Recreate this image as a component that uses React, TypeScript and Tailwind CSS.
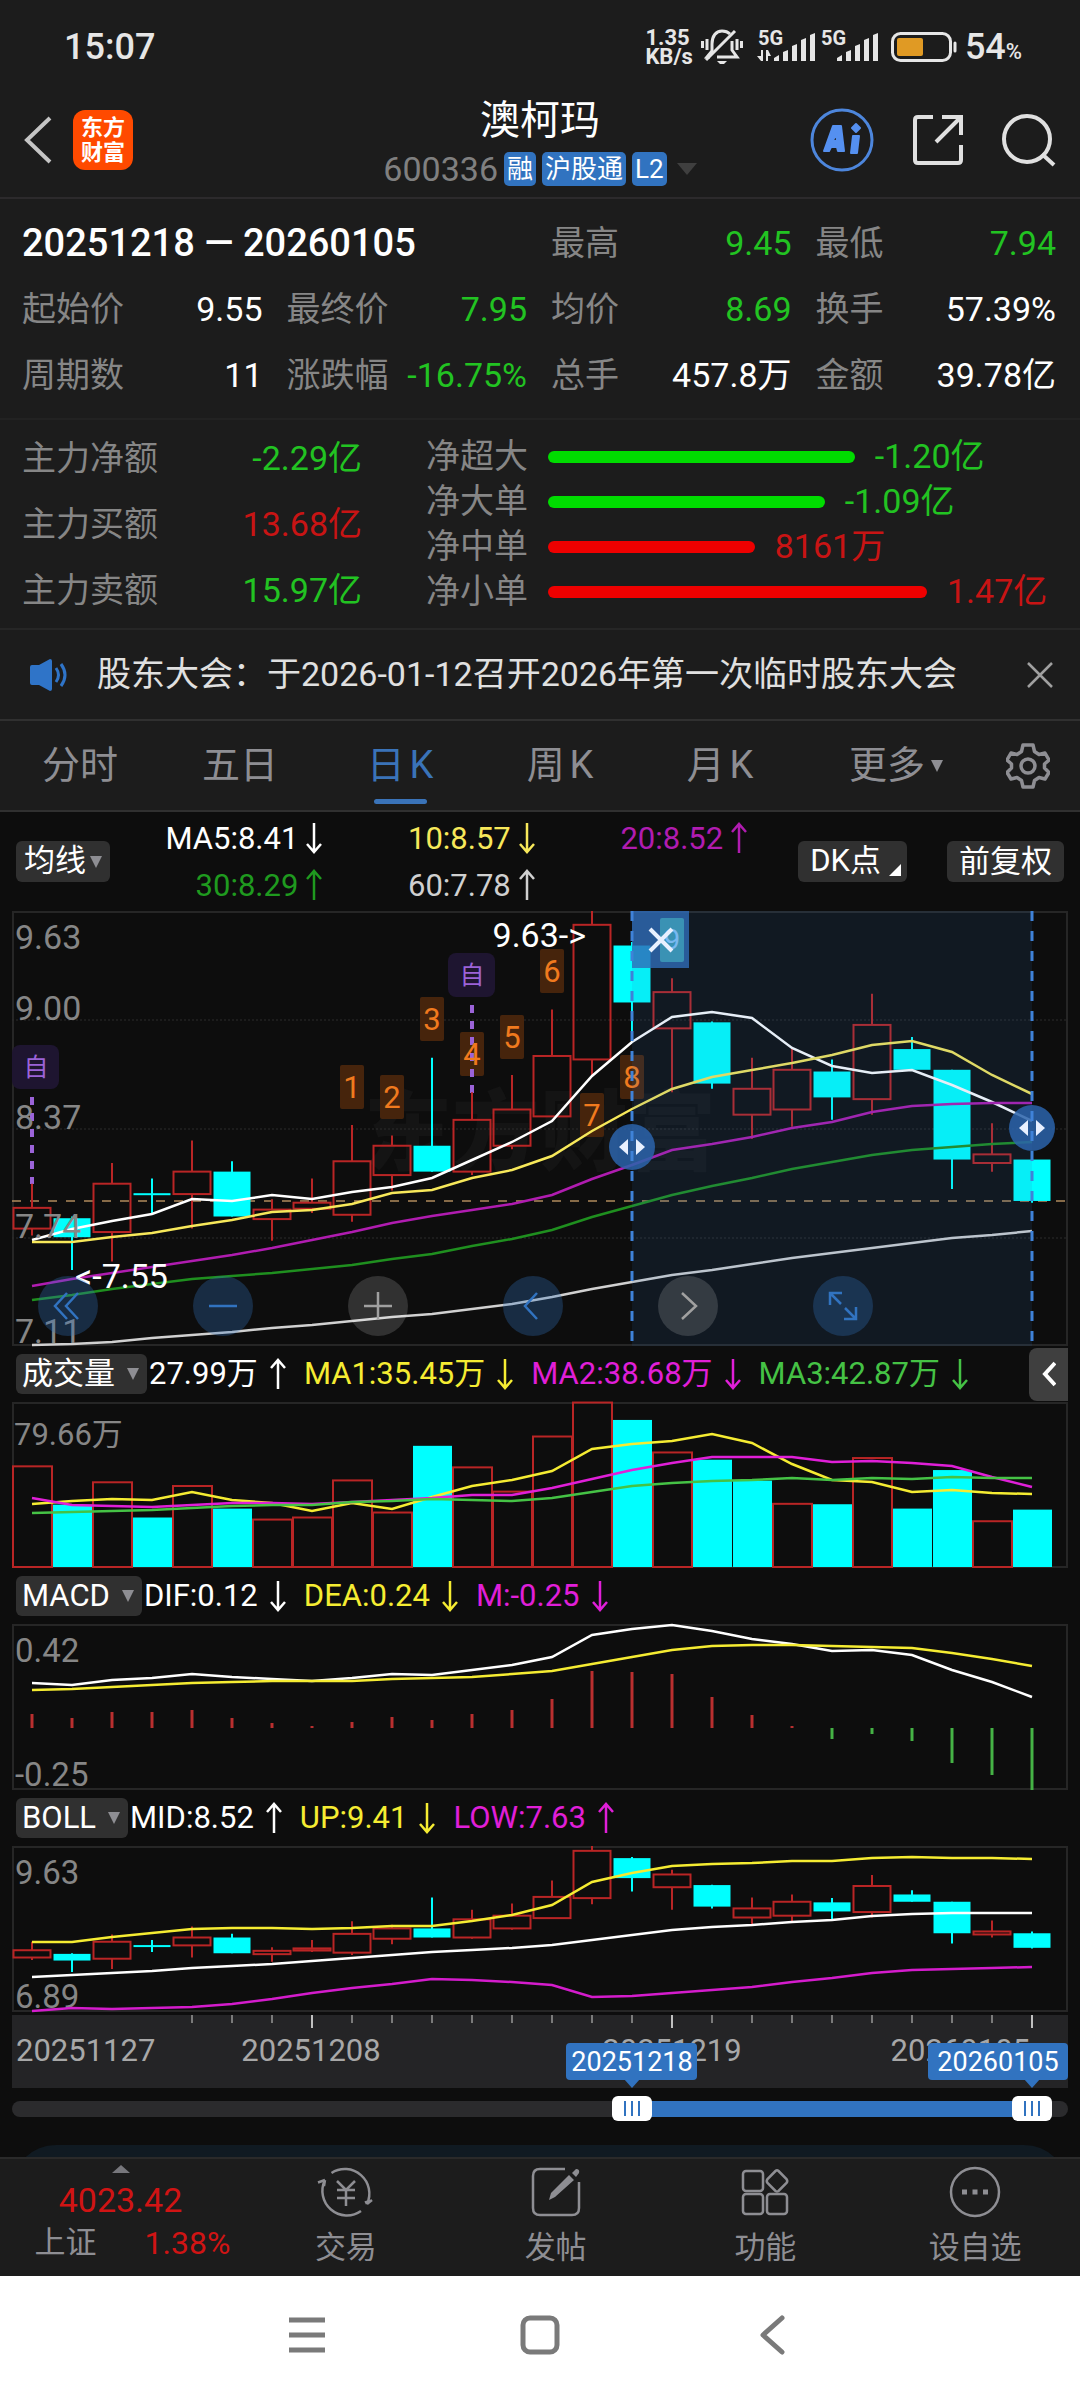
import type { ReactNode } from "react";

const RED = "#b92525";
const CYAN = "#00ffff";

// [high, body top, body bottom, low, rising]
type Candle = [number, number, number, number, boolean];

const candles: Candle[] = [
  [8.05, 7.91, 7.79, 7.75, true],
  [7.86, 7.85, 7.74, 7.55, false],
  [8.17, 8.05, 7.77, 7.6, true],
  [8.08, 7.995, 7.985, 7.88, false],
  [8.3, 8.12, 7.99, 7.79, true],
  [8.18, 8.12, 7.86, 7.86, false],
  [7.96, 7.9, 7.845, 7.72, true],
  [8.08, 7.94, 7.905, 7.88, true],
  [8.39, 8.18, 7.87, 7.83, true],
  [8.33, 8.27, 8.1, 8.01, true],
  [8.78, 8.27, 8.12, 8.12, false],
  [8.58, 8.42, 8.12, 8.1, true],
  [8.68, 8.48, 8.27, 8.25, true],
  [9.06, 8.79, 8.44, 8.44, true],
  [9.63, 9.55, 8.77, 8.67, true],
  [9.45, 9.43, 9.1, 8.88, false],
  [9.24, 9.16, 8.95, 8.58, true],
  [8.99, 8.985, 8.63, 8.6, false],
  [8.78, 8.6, 8.45, 8.31, true],
  [8.83, 8.71, 8.48, 8.38, true],
  [8.77, 8.7, 8.55, 8.42, false],
  [9.15, 8.97, 8.54, 8.45, true],
  [8.9, 8.83, 8.71, 8.71, false],
  [8.71, 8.71, 8.19, 8.02, false],
  [8.4, 8.22, 8.17, 8.12, true],
  [8.22, 8.19, 7.95, 7.94, false],
];

// volume in 万, negative when the bar is a falling one
const volumes = [
  48.6, -30.1, 40.9, -23.9, 39.1, -28.2, 22.9, 23.9, 41.8, 26.3, -58.5, 48.1,
  36.4, 63, 79.4, -71, 55.3, -51.8, -41.7, 30.5, -30.3, 52.6, -28.2, -46.8,
  22.1, -27.7,
];

const macdBars = [
  14, 10, 16, 16, 18, 10, 5, 2, 6, 11, 8, 14, 18, 29, 57, 56, 54, 31, 13, 2,
  -11, -6, -13, -35, -47, -62,
];

const priceLines = [
  { color: "#ffffff", ys: [329, 318, 310, 303, 288, 290, 284, 288, 281, 276, 267, 249, 231, 210, 165, 131, 106, 101, 107, 137, 155, 162, 159, 174, 191, 210] },
  { color: "#f7e85a", ys: [331, 331, 326, 322, 315, 309, 301, 299, 293, 282, 279, 267, 259, 245, 220, 198, 178, 166, 159, 152, 144, 134, 130, 141, 164, 183] },
  { color: "#b01cb0", ys: [375, 368, 362, 356, 350, 344, 337, 329, 321, 312, 305, 299, 293, 284, 268, 254, 239, 233, 226, 217, 211, 201, 195, 193, 192, 192] },
  { color: "#1f8f1f", ys: [389, 384, 378, 373, 368, 365, 362, 358, 354, 348, 343, 335, 328, 319, 306, 295, 284, 275, 267, 258, 251, 244, 239, 236, 233, 231] },
  { color: "#d0d0d0", ys: [434, 433, 431, 427, 424, 421, 417, 414, 410, 406, 403, 398, 393, 386, 378, 371, 364, 359, 353, 347, 342, 337, 332, 327, 324, 320] },
];

const volumeLines = [
  { color: "#f5ec32", ys: [102, 99, 97, 98, 90, 98, 101, 109, 101, 107, 95, 84, 78, 69, 47, 42, 39, 32, 41, 62, 78, 80, 90, 88, 91, 92] },
  { color: "#e01fd8", ys: [96, 103, 104, 105, 103, 101, 101, 102, 100, 98, 96, 93, 93, 86, 77, 68, 61, 55, 55, 55, 60, 59, 61, 64, 75, 85] },
  { color: "#45c245", ys: [111, 110, 109, 108, 106, 104, 103, 103, 100, 99, 97, 98, 99, 96, 90, 84, 81, 79, 78, 76, 78, 76, 77, 75, 76, 76] },
];

const macdLines = [
  { color: "#ffffff", ys: [59, 61, 56, 54, 50, 53, 55, 57, 54, 50, 51, 46, 41, 33, 11, 5, 1, 7, 15, 20, 27, 26, 31, 46, 58, 73] },
  { color: "#f5ec32", ys: [66, 65, 63, 61, 59, 58, 57, 57, 57, 55, 54, 53, 50, 47, 40, 33, 26, 22, 21, 21, 22, 23, 24, 29, 35, 42] },
];

const bollLines = [
  { color: "#f5ec32", ys: [96, 96, 91, 87, 83, 82, 82, 83, 82, 80, 80, 75, 69, 59, 36, 27, 20, 18, 17, 15, 15, 12, 11, 12, 12, 13] },
  { color: "#ffffff", ys: [131, 129, 127, 125, 122, 120, 118, 115, 112, 109, 106, 104, 102, 99, 94, 89, 84, 81, 79, 76, 74, 70, 68, 67, 67, 67] },
  { color: "#d41ccc", ys: [165, 162, 163, 162, 161, 158, 153, 147, 142, 138, 133, 134, 136, 139, 151, 150, 147, 144, 141, 136, 132, 127, 124, 123, 122, 121] },
];

// [candle index, top, label]
const countTags: [number, number, string][] = [
  [8, 154, "1"],
  [9, 164, "2"],
  [10, 86, "3"],
  [11, 121, "4"],
  [12, 104, "5"],
  [13, 38, "6"],
  [14, 182, "7"],
  [15, 144, "8"],
];

const stats = [
  { label: "最高", value: "9.45", color: "text-[#22c322]" },
  { label: "最低", value: "7.94", color: "text-[#22c322]" },
  { label: "起始价", value: "9.55", color: "text-white" },
  { label: "最终价", value: "7.95", color: "text-[#22c322]" },
  { label: "均价", value: "8.69", color: "text-[#22c322]" },
  { label: "换手", value: "57.39%", color: "text-white" },
  { label: "周期数", value: "11", color: "text-white" },
  { label: "涨跌幅", value: "-16.75%", color: "text-[#22c322]" },
  { label: "总手", value: "457.8万", color: "text-white" },
  { label: "金额", value: "39.78亿", color: "text-white" },
];

const mainFlow = [
  { label: "主力净额", value: "-2.29亿", color: "text-[#22c322]" },
  { label: "主力买额", value: "13.68亿", color: "text-[#c81414]" },
  { label: "主力卖额", value: "15.97亿", color: "text-[#22c322]" },
];

const netFlow = [
  { label: "净超大", value: "-1.20亿", width: 60.4, bar: "bg-[#00dc00]", color: "text-[#22c322]" },
  { label: "净大单", value: "-1.09亿", width: 54.5, bar: "bg-[#00dc00]", color: "text-[#22c322]" },
  { label: "净中单", value: "8161万", width: 40.7, bar: "bg-[#ee0000]", color: "text-[#c81414]" },
  { label: "净小单", value: "1.47亿", width: 74.6, bar: "bg-[#ee0000]", color: "text-[#c81414]" },
];

const x = (i: number) => 20 + i * 40;

function Lines({ lines }: { lines: { color: string; ys: number[] }[] }) {
  return (
    <>
      {lines.map((line) => (
        <polyline
          key={line.color}
          points={line.ys.map((y, i) => `${x(i)},${y}`).join(" ")}
          fill="none"
          stroke={line.color}
          strokeWidth="2.5"
        />
      ))}
    </>
  );
}

function Candles({ scale }: { scale: number }) {
  const y = (price: number) => (9.63 - price) * scale;
  return (
    <>
      {candles.map(([high, top, bottom, low, up], i) => {
        const h = Math.max(y(bottom) - y(top), 2);
        return up ? (
          <g key={i} stroke={RED} strokeWidth="2" fill="none">
            <path d={`M${x(i)} ${y(high)}V${y(top)}M${x(i)} ${y(bottom)}V${y(low)}`} />
            <rect x={x(i) - 18.5} y={y(top)} width="37" height={h} />
          </g>
        ) : (
          <g key={i}>
            <path d={`M${x(i)} ${y(high)}V${y(low)}`} stroke={CYAN} strokeWidth="2" />
            <rect x={x(i) - 18.5} y={y(top)} width="37" height={h} fill={CYAN} />
          </g>
        );
      })}
    </>
  );
}

function Arrow({ up }: { up?: boolean }) {
  return (
    <svg
      viewBox="0 0 16 32"
      role="img"
      aria-label={up ? "↑" : "↓"}
      className="h-8 w-4 shrink-0"
      fill="none"
      stroke="currentColor"
      strokeWidth="2.5"
    >
      <path d={up ? "M8 31V2M1 10L8 2L15 10" : "M8 1V30M1 22L8 30L15 22"} />
    </svg>
  );
}

function Caret() {
  return (
    <svg viewBox="0 0 12 12" className="h-3 w-3 shrink-0 text-[#8e8e93]" fill="currentColor">
      <path d="M0 0H12L6 12Z" />
    </svg>
  );
}

function StatusBar() {
  return (
    <div className="flex h-[94px] items-center pr-[58px] pl-16 text-[#e6e6e6]">
      <span className="text-4xl font-medium">15:07</span>
      <div className="ml-auto flex items-center">
        <div className="text-[22px] leading-[19px] font-bold">
          <div>1.35</div>
          <div>KB/s</div>
        </div>
        <svg viewBox="0 0 42 36" className="ml-2 h-9 w-[42px]" fill="none" stroke="currentColor" strokeWidth="3">
          <path d="M1.5 12V19M6 10V21M36 10V21M40.5 12V19" />
          <path d="M9 28H6L11 22V15C11 7 15 2 21 2C24 2 27 3 29 5M31 12V21L36 28H16" />
          <path d="M5 31L34 2" />
          <path d="M16 32H26L23 35H19Z" fill="currentColor" stroke="none" />
        </svg>
        <svg viewBox="0 0 122 34" className="ml-3.5 h-[34px] w-[122px] overflow-visible" fill="currentColor">
          <text x="1" y="15" fontSize="20" fontWeight="700">5G</text>
          <path d="M4 20V31H6V20ZM0 26L4 31V26ZM9 31V20H11V31ZM11 20L14 26H11Z" />
          <path d="M17 31V28L22 25V31ZM26 22L31 20V31H26ZM35 16L40 14V31H35ZM44 10L49 8V31H44ZM53 5L58 3V31H53Z" />
          <text x="64" y="15" fontSize="20" fontWeight="700">5G</text>
          <path d="M80 31V28L85 25V31ZM89 22L94 20V31H89ZM98 16L103 14V31H98ZM107 10L112 8V31H107ZM116 5L121 3V31H116Z" />
        </svg>
        <svg viewBox="0 0 66 30" className="ml-3 h-[30px] w-[66px]" fill="none">
          <rect x="1.5" y="1.5" width="58" height="27" rx="8" stroke="currentColor" strokeWidth="3" />
          <rect x="6" y="6" width="26" height="18" rx="2" fill="#e09a24" />
          <path d="M64 11V19" stroke="currentColor" strokeWidth="3" strokeLinecap="round" />
        </svg>
        <span className="ml-2 text-4xl font-medium">
          54<span className="text-[22px]">%</span>
        </span>
      </div>
    </div>
  );
}

function Header() {
  return (
    <header className="relative flex h-[105px] items-center border-b-2 border-[#2c2a2c] px-6 pb-3">
      <button aria-label="返回" className="text-[#c4c4c4]">
        <svg viewBox="0 0 28 48" className="h-12 w-7" fill="none" stroke="currentColor" strokeWidth="4">
          <path d="M26 2L3 24L26 46" />
        </svg>
      </button>
      <button className="ml-[21px] h-[60px] w-[60px] rounded-xl bg-[#ff4a00] text-[22px] leading-[25px] font-bold text-white">
        东方
        <br />
        财富
      </button>
      <div className="absolute inset-x-0 top-1 mx-auto flex w-80 flex-col items-center">
        <h1 className="text-[40px] leading-[46px] text-white">澳柯玛</h1>
        <div className="mt-2 flex items-center gap-1.5 text-[26px] leading-[34px] text-white">
          <span className="text-[34px] text-[#808080]">600336</span>
          <span className="rounded-[5px] bg-[#3173c0] px-[3px]">融</span>
          <span className="rounded-[5px] bg-[#3173c0] px-[3px]">沪股通</span>
          <span className="rounded-[5px] bg-[#3173c0] px-[3px]">L2</span>
          <svg viewBox="0 0 20 12" className="ml-1 h-3 w-5" fill="#3f3f3f">
            <path d="M0 0H20L10 12Z" />
          </svg>
        </div>
      </div>
      <div className="ml-auto flex items-center gap-[38px] text-[#e0e0e0]">
        <button aria-label="Ai">
          <svg viewBox="0 0 64 64" className="h-16 w-16">
            <circle cx="32" cy="32" r="30" fill="none" stroke="#4d86dc" strokeWidth="3" />
            <g fill="#5590f0" stroke="#5590f0" strokeWidth="2" strokeLinejoin="round">
              <path d="M14 43L23 18H31L34 43H28L27 39H21L19 43ZM23 33H27L26 25Z" fillRule="evenodd" />
              <path d="M43 28H49L47 45H41Z" />
              <path d="M46 16L50 20L46 24L42 20Z" />
            </g>
          </svg>
        </button>
        <button aria-label="分享">
          <svg viewBox="0 0 52 52" className="h-[52px] w-[52px]" fill="none" stroke="currentColor" strokeWidth="4">
            <path d="M21 3H6Q3 3 3 6V46Q3 49 6 49H46Q49 49 49 46V31" />
            <path d="M30 3H49V21M49 3L24 28" />
          </svg>
        </button>
        <button aria-label="搜索">
          <svg viewBox="0 0 54 54" className="h-[54px] w-[54px]" fill="none" stroke="currentColor" strokeWidth="4">
            <circle cx="25" cy="26" r="23" />
            <path d="M40 41L52 52" />
          </svg>
        </button>
      </div>
    </header>
  );
}

function Stats() {
  return (
    <section className="grid grid-cols-4 gap-x-6 border-b-2 border-[#222222] pt-[11px] pr-6 pb-2.5 pl-[22px] text-[34px] leading-[66px]">
      <h2 className="col-span-2 text-[38px] font-medium whitespace-nowrap text-white">
        20251218 — 20260105
      </h2>
      {stats.map((s) => (
        <div key={s.label} className="flex justify-between whitespace-nowrap">
          <span className="text-[#868686]">{s.label}</span>
          <span className={s.color}>{s.value}</span>
        </div>
      ))}
    </section>
  );
}

function Flow() {
  return (
    <section className="flex border-b-2 border-[#262626] pr-6 pl-[22px] text-[34px]">
      <div className="w-[340px] py-[5px] leading-[66px]">
        {mainFlow.map((f) => (
          <div key={f.label} className="flex justify-between">
            <span className="text-[#868686]">{f.label}</span>
            <span className={f.color}>{f.value}</span>
          </div>
        ))}
      </div>
      <div className="ml-16 flex-1 py-3.5 leading-[45px]">
        {netFlow.map((f) => (
          <div key={f.label} className="flex items-center">
            <span className="w-[122px] text-[#868686]">{f.label}</span>
            <div className="flex flex-1 items-center gap-5 whitespace-nowrap">
              <div className={`h-3 shrink-0 rounded-full ${f.bar}`} style={{ width: `${f.width}%` }} />
              <span className={f.color}>{f.value}</span>
            </div>
          </div>
        ))}
      </div>
    </section>
  );
}

function Notice() {
  return (
    <section className="flex h-[91px] items-center border-b-2 border-[#303030] pr-[26px] pl-[30px] text-[34px] text-[#e0e0e0]">
      <svg viewBox="0 0 40 32" className="h-8 w-10" fill="#2f74c8">
        <path d="M0 8Q0 6 2 6H9L20 0Q22 0 22 2V30Q22 32 20 32L9 26H2Q0 26 0 24Z" />
        <path d="M26 9Q31 16 26 23M31 5Q39 16 31 27" fill="none" stroke="#2f74c8" strokeWidth="3" />
      </svg>
      <p className="ml-[27px] flex-1 whitespace-nowrap">
        股东大会：于2026-01-12召开2026年第一次临时股东大会
      </p>
      <button aria-label="关闭">
        <svg viewBox="0 0 28 28" className="h-7 w-7" fill="none" stroke="#a0a0a0" strokeWidth="2.5">
          <path d="M2 2L26 26M26 2L2 26" />
        </svg>
      </button>
    </section>
  );
}

function Tabs() {
  const tabs = ["分时", "五日", "日K", "周K", "月K"];
  return (
    <nav className="flex h-[91px] items-center border-b-2 border-[#303030] text-[38px] text-[#8e8e93] [text-autospace:normal]">
      {tabs.map((tab) => (
        <button
          key={tab}
          className={`relative h-full flex-1 ${tab === "日K" ? "text-[#3a73b8]" : ""}`}
        >
          {tab}
          {tab === "日K" && (
            <span className="absolute inset-x-0 bottom-1.5 mx-auto h-[5px] w-[53px] rounded-full bg-[#3a73b8]" />
          )}
        </button>
      ))}
      <button className="flex h-full flex-1 items-center justify-center gap-1.5 pl-4">
        更多
        <Caret />
      </button>
      <button aria-label="设置" className="flex w-[104px] justify-center">
        <svg viewBox="0 0 44 46" className="h-[46px] w-11" fill="none" stroke="currentColor" strokeWidth="3.5" strokeLinejoin="round">
          <path d="M17 2H27L28.500 8.500L33 11.500L39 10L43 17L38.500 21V25L43 29.500L39 36L33 34.500L28.500 37.500L27 44H17L15.500 37.500L11 34.500L5 36L1 29.500L5.500 25V21L1 17L5 10L11 11.500L15.500 8.500Z" />
          <circle cx="22" cy="23" r="7" />
        </svg>
      </button>
    </nav>
  );
}

const averages = [
  { text: "MA5:8.41", color: "text-white", up: false },
  { text: "10:8.57", color: "text-[#f7e85a]", up: false },
  { text: "20:8.52", color: "text-[#b01cb0]", up: true },
  { text: "30:8.29", color: "text-[#1f9a1f]", up: true },
  { text: "60:7.78", color: "text-[#d0d0d0]", up: true },
];

function AverageBar() {
  return (
    <div className="flex h-[99px] items-center px-4 text-[31px] text-white">
      <button className="flex h-[41px] items-center gap-1 rounded-md bg-[#303030] pr-2 pl-2">
        均线
        <Caret />
      </button>
      <div className="mr-[51px] grid flex-1 grid-cols-3 leading-[47px]">
        {averages.map((a) => (
          <div key={a.text} className={`flex items-center justify-end gap-2 ${a.color}`}>
            {a.text}
            <Arrow up={a.up} />
          </div>
        ))}
      </div>
      <button className="flex h-[41px] items-center gap-2 rounded-md bg-[#303030] pr-1.5 pl-3">
        DK点
        <svg viewBox="0 0 12 12" className="mt-4 h-3 w-3" fill="#ffffff">
          <path d="M12 0V12H0Z" />
        </svg>
      </button>
      <button className="ml-10 h-[41px] rounded-md bg-[#303030] px-3 leading-[41px]">
        前复权
      </button>
    </div>
  );
}

function RoundButton({ label, grey, children }: { label: string; grey?: boolean; children: ReactNode }) {
  return (
    <button
      aria-label={label}
      className={`flex h-[60px] w-[60px] items-center justify-center rounded-full ${
        grey ? "bg-white/15 text-[#a0a0a0]" : "bg-[#3173c0]/30 text-[#3173c0]"
      }`}
    >
      <svg viewBox="0 0 32 32" className="h-8 w-8" fill="none" stroke="currentColor" strokeWidth="2.5">
        {children}
      </svg>
    </button>
  );
}

function Handle({ cx, cy }: { cx: number; cy: number }) {
  return (
    <g>
      <circle cx={cx} cy={cy} r="23" fill="#2b64ac" fillOpacity="0.85" />
      <path d={`M${cx - 4} ${cy - 8}V${cy + 8}L${cx - 13} ${cy}ZM${cx + 4} ${cy - 8}V${cy + 8}L${cx + 13} ${cy}Z`} fill="#e8f0ff" />
    </g>
  );
}

function PriceChart() {
  return (
    <div className="relative mx-3">
      <svg viewBox="0 0 1056 435" className="block w-full overflow-visible" fontSize="34">
        <rect x="1" y="1" width="1054" height="433" fill="none" stroke="#262626" strokeWidth="2" />
        <text x="528" y="252" fontSize="88" fontWeight="900" textAnchor="middle" fill="#141414">
          东方财富
        </text>
        <path d="M0 109H1056M0 218H1056M0 327H1056" stroke="#2c2c2c" strokeDasharray="2 2" />
        {countTags.map(([i, y]) => (
          <rect key={i} x={x(i) - 12} y={y} width="24" height="44" rx="2" fill="#46240c" />
        ))}
        <path d="M0 290H1056" stroke="#b08a5c" strokeWidth="1.5" strokeDasharray="9 9" />
        <path d="M20 186V273M460 94V182" stroke="#9b63d8" strokeWidth="4" strokeDasharray="8 8" />
        <Candles scale={172.6} />
        <Lines lines={priceLines} />
        <g fill="#868686">
          <text x="3" y="38">9.63</text>
          <text x="3" y="109">9.00</text>
          <text x="3" y="218">8.37</text>
          <text x="3" y="327">7.74</text>
          <text x="3" y="432">7.11</text>
        </g>
        <g fontSize="31" textAnchor="middle" fill="#f07a1e">
          {countTags.map(([i, y, label]) => (
            <text key={i} x={x(i)} y={y + 33}>{label}</text>
          ))}
        </g>
        <g fontSize="25" textAnchor="middle">
          <rect x="0" y="134" width="47" height="44" rx="8" fill="#1e1530" />
          <text x="24" y="165" fill="#9b63d8">自</text>
          <rect x="436" y="42" width="47" height="44" rx="8" fill="#1e1530" />
          <text x="460" y="73" fill="#9b63d8">自</text>
        </g>
        <text x="574" y="36" textAnchor="end" fill="#ffffff">9.63-&gt;</text>
        <text x="63" y="377" fill="#ffffff">&lt;-7.55</text>
        <rect x="620" y="0" width="400" height="435" fill="#3173c0" fillOpacity="0.12" />
        <rect x="620" y="0" width="57" height="57" fill="#2f6cb8" fillOpacity="0.8" />
        <rect x="648" y="7" width="24" height="44" rx="2" fill="#3a92b4" />
        <text x="660" y="39" fontSize="30" textAnchor="middle" fill="#78b8f0">9</text>
        <path d="M638 18L660 40M660 18L638 40" stroke="#e8f0ff" strokeWidth="4" />
        <Handle cx={620} cy={236} />
        <Handle cx={1020} cy={217} />
        <path d="M620 0V435M1020 0V435" stroke="#3f82d8" strokeWidth="3" strokeDasharray="10 10" />
      </svg>
      <div className="absolute bottom-2.5 left-[26px] flex gap-[95px]">
        <RoundButton label="最早">
          <path d="M15 3L3 16L15 29M26 3L14 16L26 29" />
        </RoundButton>
        <RoundButton label="缩小">
          <path d="M2 16H30" />
        </RoundButton>
        <RoundButton label="放大" grey>
          <path d="M2 16H30M16 2V30" />
        </RoundButton>
        <RoundButton label="向左">
          <path d="M20 3L8 16L20 29" />
        </RoundButton>
        <RoundButton label="向右" grey>
          <path d="M10 3L24 16L10 29" />
        </RoundButton>
        <RoundButton label="全屏">
          <path d="M3 15V3H15M3 3L14 14M17 29H29V17M29 29L18 18" />
        </RoundButton>
      </div>
    </div>
  );
}

type Reading = { text: string; color: string; up?: boolean };

function IndicatorBar({ name, readings, children }: { name: string; readings: Reading[]; children?: ReactNode }) {
  return (
    <div className="flex h-14 items-center pr-3 pl-4 text-[31px] whitespace-nowrap text-white">
      <button className="mr-0.5 flex h-10 items-center gap-3 rounded-md bg-[#303030] pr-2 pl-1.5">
        {name}
        <Caret />
      </button>
      <div className="flex gap-[18px]">
        {readings.map((r) => (
          <span key={r.text} className={`flex items-center gap-3 ${r.color}`}>
            {r.text}
            <Arrow up={r.up} />
          </span>
        ))}
      </div>
      {children}
    </div>
  );
}

function SmallChart({ children }: { children: ReactNode }) {
  return (
    <div className="px-3">
      <svg viewBox="0 0 1056 166" className="block w-full overflow-visible" fontSize="33">
        <rect x="1" y="1" width="1054" height="164" fill="none" stroke="#262626" strokeWidth="2" />
        {children}
      </svg>
    </div>
  );
}

function VolumeChart() {
  return (
    <SmallChart>
      <text x="2" y="43" fontSize="31" fill="#868686">79.66万</text>
      {volumes.map((v, i) => {
        const h = (Math.abs(v) / 79.66) * 165;
        return v > 0 ? (
          <rect key={i} x={x(i) - 19} y={165 - h} width="39" height={h} fill="none" stroke={RED} strokeWidth="2" />
        ) : (
          <rect key={i} x={x(i) - 19} y={165 - h} width="39" height={h} fill={CYAN} />
        );
      })}
      <Lines lines={volumeLines} />
    </SmallChart>
  );
}

function MacdChart() {
  return (
    <SmallChart>
      <g fill="#868686">
        <text x="3" y="38">0.42</text>
        <text x="3" y="162">-0.25</text>
      </g>
      {macdBars.map((h, i) => (
        <path key={i} d={`M${x(i)} 104v${-h}`} stroke={h > 0 ? "#b92f2f" : "#45b245"} strokeWidth="3" />
      ))}
      <Lines lines={macdLines} />
    </SmallChart>
  );
}

function BollChart() {
  return (
    <SmallChart>
      <g fill="#868686">
        <text x="3" y="38">9.63</text>
        <text x="3" y="162">6.89</text>
      </g>
      <Candles scale={60.6} />
      <Lines lines={bollLines} />
    </SmallChart>
  );
}

const thumb =
  "pointer-events-none absolute top-0 right-4 bottom-0 left-0 m-0 appearance-none bg-transparent [&::-webkit-slider-thumb]:pointer-events-auto [&::-webkit-slider-thumb]:h-[25px] [&::-webkit-slider-thumb]:w-10 [&::-webkit-slider-thumb]:appearance-none [&::-webkit-slider-thumb]:rounded-md [&::-webkit-slider-thumb]:bg-white [&::-webkit-slider-thumb]:bg-[linear-gradient(90deg,#3173c0_0_2px,#fff_2px_7px,#3173c0_7px_9px,#fff_9px_14px,#3173c0_14px_16px)] [&::-webkit-slider-thumb]:bg-[length:16px_15px] [&::-webkit-slider-thumb]:bg-center [&::-webkit-slider-thumb]:bg-no-repeat";

function DateAxis() {
  return (
    <>
      <div className="px-3 pt-[3px]">
        <svg viewBox="0 0 1056 73" className="block w-full" fontSize="31">
          <rect width="1056" height="73" fill="#242426" />
          {candles.map((_, i) => {
            if (i < 4) return null;
            const major = i % 9 === 7;
            return (
              <path key={i} d={`M${x(i)} 0V${major ? 13 : 8}`} stroke={major ? "#c0c0c0" : "#7a7a7a"} strokeWidth="2" />
            );
          })}
          <g fill="#a8a8a8">
            <text x="4" y="46">20251127</text>
            <text x="299" y="46" textAnchor="middle">20251208</text>
            <text x="660" y="46" textAnchor="middle">20251219</text>
            <text x="1018" y="46" textAnchor="end">20260105</text>
          </g>
          <g fill="#3173c0">
            <path d="M612 64H628L620 73ZM1012 64H1028L1020 73Z" />
            <rect x="554" y="28" width="131" height="37" rx="4" />
            <rect x="916" y="28" width="140" height="37" rx="4" />
          </g>
          <g fill="#ffffff" fontSize="27" textAnchor="middle">
            <text x="620" y="56">20251218</text>
            <text x="986" y="56">20260105</text>
          </g>
        </svg>
      </div>
      <div className="relative mx-3 mt-1 flex h-[33px] items-center">
        <div className="flex h-4 flex-1 overflow-hidden rounded-full bg-[#2b2b2d]">
          <div className="ml-[58.7%] w-[37.9%] bg-[#3173c0]" />
        </div>
        <input type="range" aria-label="开始日期" min={0} max={25} defaultValue={15} className={`w-[calc(100%-16px)] ${thumb}`} />
        <input type="range" aria-label="结束日期" min={0} max={25} defaultValue={25} className={`w-[calc(100%-16px)] ${thumb}`} />
      </div>
    </>
  );
}

function NavItem({ label, children }: { label: string; children: ReactNode }) {
  return (
    <a href="#" className="flex flex-1 flex-col items-center pt-1.5">
      <svg viewBox="0 0 58 54" className="h-[54px] w-[58px]" fill="none" stroke="currentColor" strokeWidth="2.5">
        {children}
      </svg>
      <span className="mt-2 text-[31px] leading-[42px]">{label}</span>
    </a>
  );
}

function BottomNav() {
  return (
    <nav className="flex h-[119px] border-t-2 border-[#2a2a2a] bg-[#1c1c1c] text-[#8e8e93]">
      <button className="flex w-[241px] flex-col items-center pt-1.5 text-[#d01414]">
        <svg viewBox="0 0 18 8" className="h-2 w-[18px]" fill="#77777c">
          <path d="M9 0L18 8H0Z" />
        </svg>
        <span className="mt-1 text-[34px] leading-[46px]">4023.42</span>
        <span className="flex gap-12 pl-6 text-[31px] leading-[40px]">
          <span className="text-[#8e8e93]">上证</span>
          <span className="text-[32px]">1.38%</span>
        </span>
      </button>
      <NavItem label="交易">
        <path d="M14.500 8A24.500 24.500 0 0 1 50 39M50 39L55 35M50 39L48.500 36" />
        <path d="M44 46A24.500 24.500 0 0 1 8 15M8 15L1 17.500M8 15L7 21" />
        <path d="M20 16L29 25L38 16M29 25V41M20 25H38M20 33H38" />
      </NavItem>
      <NavItem label="发帖">
        <path d="M38 4H13Q6 4 6 11V43Q6 50 13 50H45Q52 50 52 43V17" />
        <path d="M22 35L24 28L42 10L47 15L28 32ZM45 8L49 4Q53 4 52 8L49 12Z" fill="currentColor" stroke="none" />
      </NavItem>
      <NavItem label="功能">
        <rect x="7" y="6" width="20" height="20" rx="3" />
        <rect x="7" y="29" width="20" height="20" rx="3" />
        <rect x="31" y="29" width="20" height="20" rx="3" />
        <path d="M39.500 6L31.500 14Q30 16 31.500 18L39.500 26Q41 27 42.500 26L50.500 18Q52 16 50.500 14L42.500 6Q41 4.500 39.500 6Z" />
      </NavItem>
      <NavItem label="设自选">
        <circle cx="29" cy="27" r="24" />
        <path d="M16 24.500h5v5h-5zM26.500 24.500h5v5h-5zM37 24.500h5v5h-5z" fill="currentColor" stroke="none" />
      </NavItem>
    </nav>
  );
}

function SystemNav() {
  return (
    <div className="flex h-[124px] items-center justify-center gap-[193px] bg-white pb-1.5 text-[#7a7a7a]">
      <button aria-label="Recents">
        <svg viewBox="0 0 40 40" className="h-10 w-10" stroke="currentColor" strokeWidth="5">
          <path d="M2 5H38M2 20H38M2 35H38" />
        </svg>
      </button>
      <button aria-label="Home">
        <svg viewBox="0 0 40 40" className="h-10 w-10" fill="none" stroke="currentColor" strokeWidth="5">
          <rect x="3" y="3" width="34" height="34" rx="7" />
        </svg>
      </button>
      <button aria-label="Back">
        <svg viewBox="0 0 40 40" className="h-10 w-10" fill="none" stroke="currentColor" strokeWidth="5" strokeLinecap="round" strokeLinejoin="round">
          <path d="M29 3L10 20L29 37" />
        </svg>
      </button>
    </div>
  );
}

export default function App() {
  return (
    <div className="w-full overflow-hidden bg-[#0d0d0d] font-['Roboto','Noto_Sans_CJK_SC',sans-serif]">
      <div className="bg-[#1c1c1c]">
        <StatusBar />
        <Header />
        <Stats />
        <Flow />
        <Notice />
        <Tabs />
      </div>
      <AverageBar />
      <PriceChart />
      <IndicatorBar
        name="成交量"
        readings={[
          { text: "27.99万", color: "text-white", up: true },
          { text: "MA1:35.45万", color: "text-[#f5ec32]" },
          { text: "MA2:38.68万", color: "text-[#e01fd8]" },
          { text: "MA3:42.87万", color: "text-[#45c245]" },
        ]}
      >
        <button aria-label="展开" className="ml-auto flex h-[53px] w-[39px] items-center justify-center rounded-l-lg bg-[#3f3f3f]">
          <svg viewBox="0 0 14 26" className="h-[26px] w-3.5" fill="none" stroke="#ffffff" strokeWidth="4">
            <path d="M13 2L3 13L13 24" />
          </svg>
        </button>
      </IndicatorBar>
      <VolumeChart />
      <IndicatorBar
        name="MACD"
        readings={[
          { text: "DIF:0.12", color: "text-white" },
          { text: "DEA:0.24", color: "text-[#f5ec32]" },
          { text: "M:-0.25", color: "text-[#e01fd8]" },
        ]}
      />
      <MacdChart />
      <IndicatorBar
        name="BOLL"
        readings={[
          { text: "MID:8.52", color: "text-white", up: true },
          { text: "UP:9.41", color: "text-[#f5ec32]" },
          { text: "LOW:7.63", color: "text-[#e01fd8]", up: true },
        ]}
      />
      <BollChart />
      <DateAxis />
      <div className="mt-5 h-3 overflow-hidden px-3">
        <div className="h-24 rounded-t-[44px] bg-[#101a22]" />
      </div>
      <BottomNav />
      <SystemNav />
    </div>
  );
}
